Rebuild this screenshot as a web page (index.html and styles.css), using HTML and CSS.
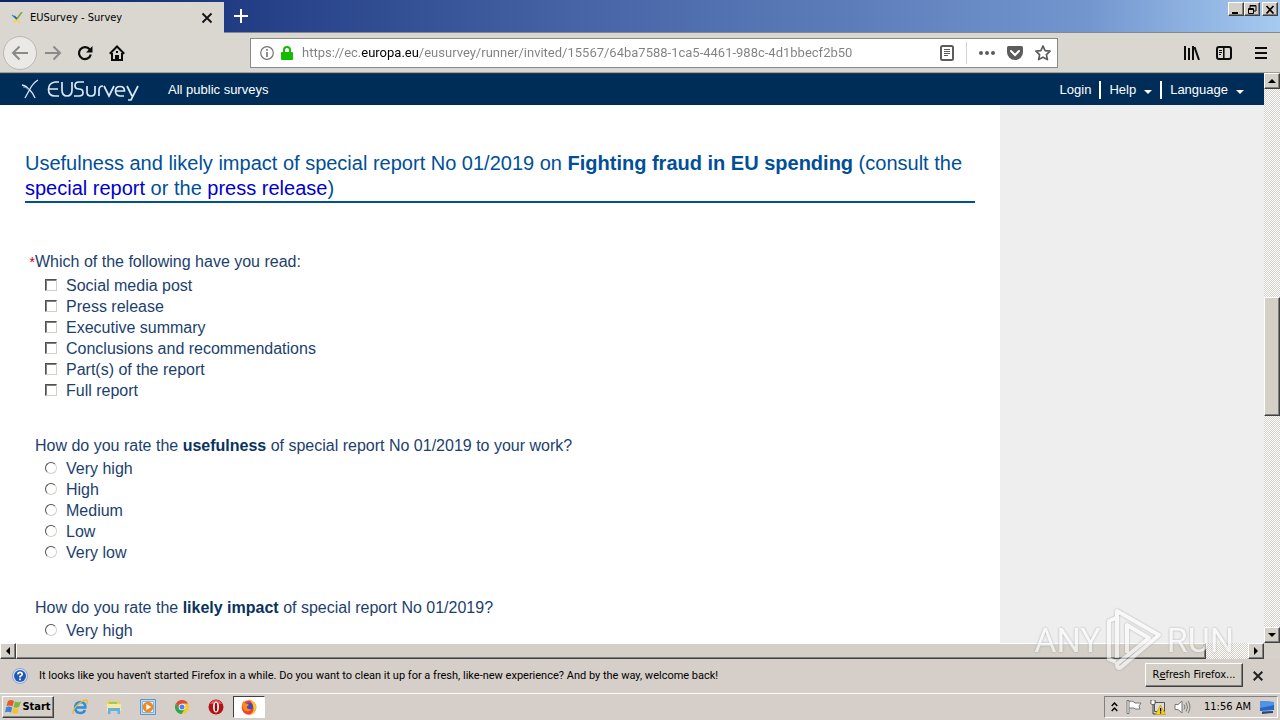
FILE: index.html
```html
<!DOCTYPE html>
<html lang="en">
<head>
<meta charset="utf-8">
<title>EUSurvey - Survey</title>
<link rel="stylesheet" href="styles.css">
</head>
<body class="desktop">
<header class="titlebar">
  <div class="tab">
    <svg class="tab-icon" width="12" height="12" viewBox="0 0 12 12" fill="none" stroke-width="1.6"><path d="M1 3l5 4" stroke="#4a90d9"/><path d="M11 0L5 8" stroke="#7cab3a"/><path d="M5 7l-2 4M6 7l3 4" stroke="#f0d840"/><path d="M3 4l3 3" stroke="#2860a8"/></svg>
    <span class="tab-title">EUSurvey - Survey</span>
    <button class="plain" aria-label="Close tab"><svg width="12" height="12" viewBox="0 0 12 12" stroke="#111" stroke-width="1.8"><path d="M1.500 1.500l9 9M10.500 1.500l-9 9"/></svg></button>
  </div>
  <button class="plain new-tab" aria-label="New tab"><svg width="14" height="14" viewBox="0 0 14 14" stroke="#fff" stroke-width="2"><path d="M7 0v14M0 7h14"/></svg></button>
  <div class="window-buttons">
    <button class="raised win" aria-label="Minimize"><svg width="10" height="9" viewBox="0 0 10 9"><path d="M1 7h6v2H1z"/></svg></button>
    <button class="raised win" aria-label="Restore"><svg width="10" height="9" viewBox="0 0 10 9" fill="none" stroke="#000"><path d="M3 1h6M3 3V.5h6V6H7" /><path d="M1.500 3.500h5v5h-5zM1 4.500h6"/></svg></button>
    <button class="raised win win-close" aria-label="Close"><svg width="10" height="9" viewBox="0 0 10 9" stroke="#000" stroke-width="1.700"><path d="M1.500 1l7 7.500M8.500 1l-7 7.500"/></svg></button>
  </div>
</header>

<nav class="toolbar">
  <button class="plain back" aria-label="Back"><svg width="18" height="16" viewBox="0 0 18 16" fill="none" stroke="#8a8a8a" stroke-width="2"><path d="M17 8H2M8.500 1.500L2 8l6.500 6.500"/></svg></button>
  <button class="plain" aria-label="Forward"><svg width="18" height="16" viewBox="0 0 18 16" fill="none" stroke="#8a8a8a" stroke-width="2"><path d="M1 8h15M9.500 1.500L16 8l-6.500 6.500"/></svg></button>
  <button class="plain reload" aria-label="Reload"><svg width="16" height="16" viewBox="0 0 16 16"><path d="M12.800 4.500A6 6 0 1 0 13.800 9.500" fill="none" stroke="#0c0c0d" stroke-width="2.200"/><path d="M15.500 1v6.500H9z" fill="#0c0c0d"/></svg></button>
  <button class="plain" aria-label="Home"><svg width="16" height="16" viewBox="0 0 16 16" fill="none" stroke="#0c0c0d" stroke-width="2"><path d="M.8 8.700L8 1.500l7.200 7.200M3 8v7h10V8"/><path d="M6 15v-5h4v5z" fill="#0c0c0d" stroke="none"/><path d="M7 7h2" /></svg></button>
  <div class="address">
    <svg width="14" height="14" viewBox="0 0 14 14" fill="none" stroke="#737373"><circle cx="7" cy="7" r="6.300" stroke-width="1.200"/><path d="M7 6v5M7 3v1.700" stroke-width="1.600"/></svg>
    <svg width="12" height="14" viewBox="0 0 12 14"><path d="M3 7V4a3 3 0 0 1 6 0v3" fill="none" stroke="#12bc00" stroke-width="2"/><rect y="6" width="12" height="8" rx="1" fill="#12bc00"/></svg>
    <input class="url" aria-label="Address" value="https://ec.europa.eu/eusurvey/runner/invited/15567/64ba7588-1ca5-4461-988c-4d1bbecf2b50">
    <button class="plain reader" aria-label="Reader view"><svg width="14" height="16" viewBox="0 0 14 16" fill="none" stroke="#5c5c5c"><rect x="1" y="1" width="12" height="14" rx="1.500" stroke-width="2"/><path d="M4 4.500h6M4 6.500h6M4 8.500h6M4 10.500h4"/></svg></button>
    <span class="address-line"></span>
    <button class="plain" aria-label="Page actions"><svg width="16" height="4" viewBox="0 0 16 4" fill="#5c5c5c"><circle cx="2" cy="2" r="2"/><circle cx="8" cy="2" r="2"/><circle cx="14" cy="2" r="2"/></svg></button>
    <button class="plain" aria-label="Save to Pocket"><svg width="16" height="14" viewBox="0 0 16 14"><path d="M1.500 0h13Q16 0 16 1.500V6a8 8 0 0 1-16 0V1.500Q0 0 1.500 0z" fill="#5c5c5c"/><path d="M4 5l4 4 4-4" fill="none" stroke="#fff" stroke-width="2" stroke-linecap="round"/></svg></button>
    <button class="plain" aria-label="Bookmark"><svg width="16" height="16" viewBox="0 0 16 16" fill="none" stroke="#5c5c5c" stroke-width="1.700" stroke-linejoin="round"><path d="M8 1l2.100 4.600 5 .6-3.700 3.400 1 5L8 12.200l-4.400 2.400 1-5L.9 6.200l5-.6z"/></svg></button>
  </div>
  <div class="tools">
    <button class="plain" aria-label="Library"><svg width="16" height="14" viewBox="0 0 16 14" stroke="#0c0c0d" stroke-width="2"><path d="M1 0v14M5 2v12M9 0v14M10.500 1l4.500 13"/></svg></button>
    <button class="plain" aria-label="Sidebars"><svg width="16" height="14" viewBox="0 0 16 14" fill="none" stroke="#0c0c0d"><rect x="1" y="1" width="14" height="12" rx="2" stroke-width="2"/><path d="M7.800 1v12" stroke-width="1.600"/><path d="M3 4.500h3M3 6.500h3M3 8.500h2"/></svg></button>
    <button class="plain menu" aria-label="Menu"><svg width="12" height="12" viewBox="0 0 12 12" stroke="#0c0c0d" stroke-width="2"><path d="M0 1h12M0 6h12M0 11h12"/></svg></button>
  </div>
</nav>

<div class="viewport">
  <div class="page">
    <div class="site-nav">
      <svg class="logo" width="118" height="24" viewBox="0 0 118 24" fill="none" stroke="#dce8f4" role="img" aria-label="EUSurvey">
        <path d="M1 7q5 1 7 5M17 2q-5 3-8 9l-5 9M8 11q4 4 6 9" stroke-width="1.300"/><path d="M2 9q3 0 6 3" stroke="#6f93b8"/>
        <g stroke-width="1.700"><path d="M38 4h-4q-6.500 1-6.500 7.500T34 18h4M28 11h9"/><path d="M41 4v8q0 6 5 6t5-6V4"/><path d="M63 4h-5q-4 0-4 3.500t4 3.500 4 3.500-4 3.500h-5"/><path d="M66 8v6q0 4 4 4t4-4V8"/><path d="M78 18v-6q0-4 4-4"/><path d="M83 8l5 10 5-10"/><path d="M94.500 13h9q0-4.500-4.500-4.500T94.500 13t4.500 5h4"/><path d="M106 8l5 10M117 8l-7 14h-3"/></g>
      </svg>
      <a class="nav-link" href="#">All public surveys</a>
      <div class="nav-right">
        <a class="nav-link" href="#">Login</a>
        <a class="nav-link divided" href="#">Help <span class="caret"></span></a>
        <a class="nav-link divided" href="#">Language <span class="caret"></span></a>
      </div>
    </div>
    <div class="columns">
      <main class="survey">
        <h1 class="section-title">Usefulness and likely impact of special report No 01/2019 on <strong>Fighting fraud in EU spending</strong> (consult the <a href="#">special report</a> or the <a href="#">press release</a>)</h1>
        <form>
          <fieldset class="question">
            <legend><span class="required">*</span>Which of the following have you read:</legend>
            <label class="option"><input type="checkbox">Social media post</label>
            <label class="option"><input type="checkbox">Press release</label>
            <label class="option"><input type="checkbox">Executive summary</label>
            <label class="option"><input type="checkbox">Conclusions and recommendations</label>
            <label class="option"><input type="checkbox">Part(s) of the report</label>
            <label class="option"><input type="checkbox">Full report</label>
          </fieldset>
          <fieldset class="question">
            <legend><span class="required"></span>How do you rate the <strong>usefulness</strong> of special report No 01/2019 to your work?</legend>
            <label class="option"><input type="radio" name="useful">Very high</label>
            <label class="option"><input type="radio" name="useful">High</label>
            <label class="option"><input type="radio" name="useful">Medium</label>
            <label class="option"><input type="radio" name="useful">Low</label>
            <label class="option"><input type="radio" name="useful">Very low</label>
          </fieldset>
          <fieldset class="question">
            <legend><span class="required"></span>How do you rate the <strong>likely impact</strong> of special report No 01/2019?</legend>
            <label class="option"><input type="radio" name="impact">Very high</label>
          </fieldset>
        </form>
      </main>
      <aside class="side"></aside>
    </div>
  </div>
  <div class="vscroll">
    <button class="raised arrow" aria-label="Scroll up"><svg width="8" height="4" viewBox="0 0 8 4"><path d="M4 0l4 4H0z"/></svg></button>
    <span class="track-before"></span><span class="raised vthumb"></span><span class="track-after"></span>
    <button class="raised arrow" aria-label="Scroll down"><svg width="8" height="4" viewBox="0 0 8 4"><path d="M0 0h8L4 4z"/></svg></button>
  </div>
</div>

<div class="hscroll">
  <button class="raised arrow" aria-label="Scroll left"><svg width="4" height="8" viewBox="0 0 4 8"><path d="M4 0v8L0 4z"/></svg></button>
  <span class="raised hthumb"></span><span class="htrack"></span>
  <button class="raised arrow" aria-label="Scroll right"><svg width="4" height="8" viewBox="0 0 4 8"><path d="M0 0v8l4-4z"/></svg></button>
  <span class="corner"></span>
</div>

<div class="notice">
  <svg width="16" height="16" viewBox="0 0 16 16"><circle cx="8" cy="8" r="7.500" fill="#dfe9f7" stroke="#8ba4cf"/><circle cx="8" cy="8" r="6" fill="#2458b8"/><path d="M5.800 6.300Q6 4.300 8 4.300t2.200 1.900Q10.200 7.300 8 8.500v1" fill="none" stroke="#fff" stroke-width="1.700"/><path d="M7.100 10.500h1.800v1.700H7.100z" fill="#fff"/></svg>
  <span class="notice-text">It looks like you haven't started Firefox in a while. Do you want to clean it up for a fresh, like-new experience? And by the way, welcome back!</span>
  <button class="raised refresh">R<u>e</u>fresh Firefox...</button>
  <button class="plain" aria-label="Dismiss"><svg width="10" height="10" viewBox="0 0 10 10" stroke="#222" stroke-width="2"><path d="M.7.7l8.600 8.600M9.300.7L.7 9.300"/></svg></button>
</div>

<footer class="taskbar">
  <button class="raised start"><svg width="17" height="16" viewBox="0 0 17 16"><path d="M3 2q3-2 6 0L7.500 7.500Q5 6 1.500 7z" fill="#e8572a"/><path d="M10 2.500q3 1.500 6 0L14 8q-3 1.500-5.500 0z" fill="#7cb83c"/><path d="M1.200 8.200q3-1.500 6 .3L6 13.500q-3-1.500-6-.2z" fill="#3f82d8"/><path d="M8.200 9q3 1.500 5.600.2L12.500 14q-3 1.500-5.600 0z" fill="#f6c12c"/></svg>Start</button>
  <div class="launchers">
    <button class="plain" aria-label="Internet Explorer"><svg width="16" height="16" viewBox="0 0 16 16" fill="none"><path d="M4 8.500h9.300Q13.500 3 8.300 3 3.200 3.500 3.200 8.700 3.500 14 8.500 14q3.300 0 4.500-3" stroke="#2a8fdc" stroke-width="2.600"/><path d="M1.500 15Q-.5 12 5 6.500T14.500 1q1.500 1 0 4" stroke="#e9b938" stroke-width="1.300"/></svg></button>
    <button class="plain" aria-label="Explorer"><svg width="16" height="16" viewBox="0 0 16 16"><path d="M1 3l1-2h4l1 1h7v4H1z" fill="#e8cf70"/><path d="M1 5h14v7H1z" fill="#f8e9a0"/><path d="M3 3h8v2H3z" fill="#9cc76b"/><path d="M2 9h12v6h-2.500v-3h-7v3H2z" fill="#62b3e4"/></svg></button>
    <button class="plain" aria-label="Media Player"><svg width="16" height="16" viewBox="0 0 16 16"><path d="M.5.5h15v15H.5z" fill="#b9d9f4" stroke="#5c97ce"/><path d="M2.500 2.500h11v11h-11z" fill="#e8f2fb" stroke="#84b2dd"/><circle cx="8" cy="8" r="5.300" fill="#f08a1c"/><path d="M6.300 5l5 3-5 3z" fill="#fff"/></svg></button>
    <button class="plain" aria-label="Chrome"><svg width="14" height="14" viewBox="0 0 14 14"><circle cx="7" cy="7" r="7" fill="#f7c92b"/><path d="M.9 3.500A7 7 0 0 1 13.100 3.500H7L4 8.800z" fill="#dd4b3e"/><path d="M.9 3.500A7 7 0 0 0 6.500 14L10 8.800 4 8.800z" fill="#30a552"/><circle cx="7" cy="7" r="3.300" fill="#fff"/><circle cx="7" cy="7" r="2.500" fill="#4285f4"/></svg></button>
    <button class="plain" aria-label="Opera"><svg width="16" height="16" viewBox="0 0 16 16"><circle cx="8" cy="8" r="7.500" fill="#b51218"/><path d="M2 5a6.500 6.500 0 0 1 12 0z" fill="#d95558"/><ellipse cx="8" cy="8" rx="3" ry="5.500" fill="#fff"/><ellipse cx="8" cy="8" rx="1.300" ry="4.500" fill="#8e1015"/></svg></button>
    <button class="plain active-app" aria-label="Firefox"><svg width="16" height="16" viewBox="0 0 16 16"><circle cx="8" cy="8.500" r="7.300" fill="#f3402f"/><path d="M8 .5q7 2 7.300 8A7.300 7.300 0 0 1 8 15.800q5-2 4.500-7T8 .5z" fill="#ffc42e"/><circle cx="8" cy="7.500" r="3.700" fill="#3a4fc0"/><path d="M1 5q1-3 2-3 0 2 2 2.500 3 0 2.500 2L5.500 8q1 3 5 2-2 3-5.500 2T1 5z" fill="#ff8a1c"/></svg></button>
  </div>
  <div class="tray">
    <svg width="7" height="10" viewBox="0 0 7 10" fill="none" stroke="#000" stroke-width="1.400"><path d="M.7 4L3.500 1l2.800 3M.7 9l2.800-3 2.800 3"/></svg>
    <svg width="16" height="14" viewBox="0 0 16 14" fill="#fff" stroke="#777"><path d="M3 1.500q3-1 5 .5l1 1h6l-2 3 1 3H9L8 8H3"/><path d="M1 .5h2v13H1z"/></svg>
    <svg width="16" height="15" viewBox="0 0 16 15"><path d="M4.500 2.500h10v9h-10z" fill="#ddd" stroke="#555"/><path d="M1 0v4h4V0M3 4v10h3" fill="none" stroke="#444"/><path d="M1.500 1h3v3h-3z" fill="#fff"/><path d="M10.500 5l5 9.500h-10z" fill="#f7cf1c" stroke="#b89200" stroke-width=".6"/><path d="M10 8h1.200v3.500H10zM10 12.300h1.200v1.200H10z"/></svg>
    <svg width="17" height="14" viewBox="0 0 17 14" fill="none" stroke="#777"><path d="M1 4.500h3L8 1v12L4 9.500H1z" fill="#fff"/><path d="M10 4.500q2 2.500 0 5M12 2.500q3 4.500 0 9M14 1q4 6 0 12"/></svg>
    <time class="clock">11:56 AM</time>
    <svg width="16" height="13" viewBox="0 0 16 13"><path d="M1 0l14 1v8l-14 1z" fill="#2767c4"/><path d="M1 0l14 1v3L1 7z" fill="#4f95e6"/><path d="M3 10.500l11-.5v2l-11 1z" fill="#27477b"/></svg>
  </div>
</footer>

<div class="watermark" aria-hidden="true">
  <span>ANY</span>
  <svg width="58" height="64" viewBox="0 0 58 64" fill="none" stroke="#fff" stroke-width="4" stroke-linejoin="round"><path d="M11 10L4 13v38l7 3"/><path d="M12 50V3l42 24-39 33q-3 0-3-4l32-26-22-13v28"/></svg>
  <span>RUN</span>
</div>
</body>
</html>
```
FILE: styles.css
```css
* { box-sizing: border-box; }

.desktop {
  margin: 0;
  height: 100vh;
  display: grid;
  grid-template-rows: 33px 40px minmax(0, 1fr) 16px 34px 27px;
  overflow: hidden;
  background: #d6d2cb;
  color: #000;
  font: 11px/16px "DejaVu Sans Condensed", "Noto Sans", sans-serif;
}

button { font: inherit; color: inherit; }
svg { display: block; flex: none; }

.plain {
  display: flex;
  align-items: center;
  justify-content: center;
  padding: 0;
  border: 0;
  background: none;
}

.raised {
  display: flex;
  align-items: center;
  justify-content: center;
  padding: 0;
  background: #d4d0c8;
  border: 1px solid;
  border-color: #fff #404040 #404040 #fff;
  box-shadow: inset -1px -1px #808080;
}

/* Window title bar */
.titlebar {
  display: flex;
  background: linear-gradient(90deg, #0a246a 0, #243f86 20%, #4764a6 45%, #5b7bb8 65%, #7396cf 85%, #a6caf0 100%);
  border-bottom: 1px solid #85888c;
}
.tab {
  display: flex;
  align-items: center;
  width: 224px;
  height: 31px;
  margin-top: 2px;
  padding: 0 11px;
  background: #dad7d1;
}
.tab-title { flex: 1; margin-left: 7px; }
.new-tab { width: 34px; }
.window-buttons { display: flex; margin: 2px 2px 0 auto; }
.win { width: 16px; height: 14px; }
.win-close { margin-left: 2px; }

/* Navigation toolbar */
.toolbar {
  display: flex;
  align-items: center;
  gap: 16px;
  padding: 0 13px 0 3px;
  background: #dad7d1;
  border-bottom: 1px solid #a19d98;
}
.back {
  width: 34px;
  height: 34px;
  margin-right: -9px;
  border: 1px solid #bab7b2;
  border-radius: 50%;
  background: #ebe9e5;
}
.reload { margin-left: -1px; }
.address {
  display: flex;
  flex: 1;
  align-items: center;
  gap: 12px;
  height: 30px;
  margin-left: 109px;
  padding: 0 6px 0 9px;
  background: #fff;
  border: 1px solid #8b8984;
}
.address > svg + svg { margin-left: -5px; }
.url {
  flex: 1;
  min-width: 0;
  margin-left: -3px;
  padding: 0;
  border: 0;
  outline: 0;
  font: 13px/18px Roboto, "Noto Sans", sans-serif;
  background: linear-gradient(90deg, #808080 59px, #000 59px, #000 117px, #808080 117px);
  background-clip: text;
  -webkit-background-clip: text;
  color: transparent;
}
.address-line { width: 1px; height: 22px; background: #d0d0d0; }
.tools { display: flex; gap: 16px; margin-left: 110px; }
.menu { padding-left: 7px; }

/* Web page */
.viewport { display: flex; min-height: 0; }
.page {
  flex: 1;
  display: flex;
  flex-direction: column;
  overflow: hidden;
  background: #fff;
  font-family: "Liberation Sans", Arial, sans-serif;
}
.site-nav {
  display: flex;
  flex: none;
  align-items: center;
  height: 32px;
  padding: 0 20px 0 21px;
  background: #002d58;
  border-top: 1px solid #1c3a5c;
}
.nav-link {
  display: flex;
  align-items: center;
  color: #fff;
  font-size: 13px;
  line-height: 18px;
  text-decoration: none;
}
.logo { margin-right: 29px; }
.nav-right { display: flex; gap: 8px; margin-left: auto; }
.divided { padding-left: 8px; border-left: 2px solid #fff; }
.caret {
  margin: 4px 0 0 8px;
  border: 4px solid transparent;
  border-top-color: #fff;
  border-bottom: 0;
}

.columns { display: flex; flex: 1; min-height: 0; }
.survey { flex: 1; min-width: 0; padding: 46px 25px 0; }
.side { width: 264px; background: #eee; }

.section-title {
  margin: 0 0 48px;
  border-bottom: 2px solid #004f98;
  color: #004f98;
  font-size: 20px;
  font-weight: 400;
  line-height: 25px;
}
.section-title a { color: #0000d0; text-decoration: none; }

.question {
  margin: 0 0 34px;
  padding: 0;
  border: 0;
  color: #1c3f6e;
  font-size: 16px;
  line-height: 21px;
}
.question legend { display: block; padding: 0; margin-bottom: 2px; }
.question strong { color: #0a3260; }
.required {
  display: inline-block;
  width: 10px;
  color: #d00000;
  font-size: 14px;
  text-align: right;
}
.option {
  display: flex;
  align-items: center;
  gap: 9px;
  padding-left: 20px;
}
.option input {
  appearance: none;
  width: 12px;
  height: 12px;
  margin: 0 0 2px;
  background: #fff;
  border: 1px solid;
  border-color: #505050 #d4d0c8 #d4d0c8 #505050;
}
.option input[type="checkbox"] { box-shadow: inset 1px 1px #808080; }
.option input[type="radio"] { border-radius: 50%; }

/* Scroll bars */
.vscroll, .hscroll, .htrack {
  background: repeating-conic-gradient(#fff 0 25%, #d4d0c8 0 50%) 0 0 / 2px 2px;
}
.vscroll { display: flex; flex-direction: column; width: 16px; }
.arrow { flex: none; width: 16px; height: 16px; }
.track-before { flex: 208; }
.vthumb { flex: 118; }
.track-after { flex: 211; }
.hscroll { display: flex; }
.hthumb { flex: 1190; }
.htrack { flex: 42; }
.corner { width: 16px; background: #d6d2cb; }

/* Notification bar */
.notice {
  display: flex;
  align-items: center;
  padding: 0 17px 0 12px;
  background: #d6cfc9;
}
.notice-text {
  flex: 1;
  margin-left: 11px;
  font-family: Roboto, sans-serif;
  white-space: nowrap;
}
.refresh { width: 98px; height: 24px; margin: 0 10px 2px 0; }

/* Task bar */
.taskbar {
  display: flex;
  align-items: center;
  padding: 0 2px;
  background: #d6cfc9;
  border-top: 1px solid #fff;
}
.start {
  width: 52px;
  height: 22px;
  font-weight: 700;
}
.launchers { display: flex; align-items: center; margin-left: 9px; }
.launchers .plain { width: 34px; height: 22px; }
.launchers .active-app {
  width: 32px;
  background: #fff;
  border: 1px solid;
  border-color: #404040 #fff #fff #404040;
}
.tray {
  display: flex;
  align-items: center;
  gap: 8px;
  height: 22px;
  margin-left: auto;
  padding: 0 2px 0 6px;
  border: 1px solid;
  border-color: #808080 #fff #fff #808080;
}
.clock { margin-left: 5px; }

/* Recording watermark over the desktop */
.watermark {
  position: absolute;
  right: 46px;
  bottom: 48px;
  display: flex;
  align-items: center;
  gap: 4px;
  color: #fff;
  font: 34px/64px Roboto, sans-serif;
  opacity: 0.6;
  filter: drop-shadow(0 0 1px #888);
  pointer-events: none;
}
```
